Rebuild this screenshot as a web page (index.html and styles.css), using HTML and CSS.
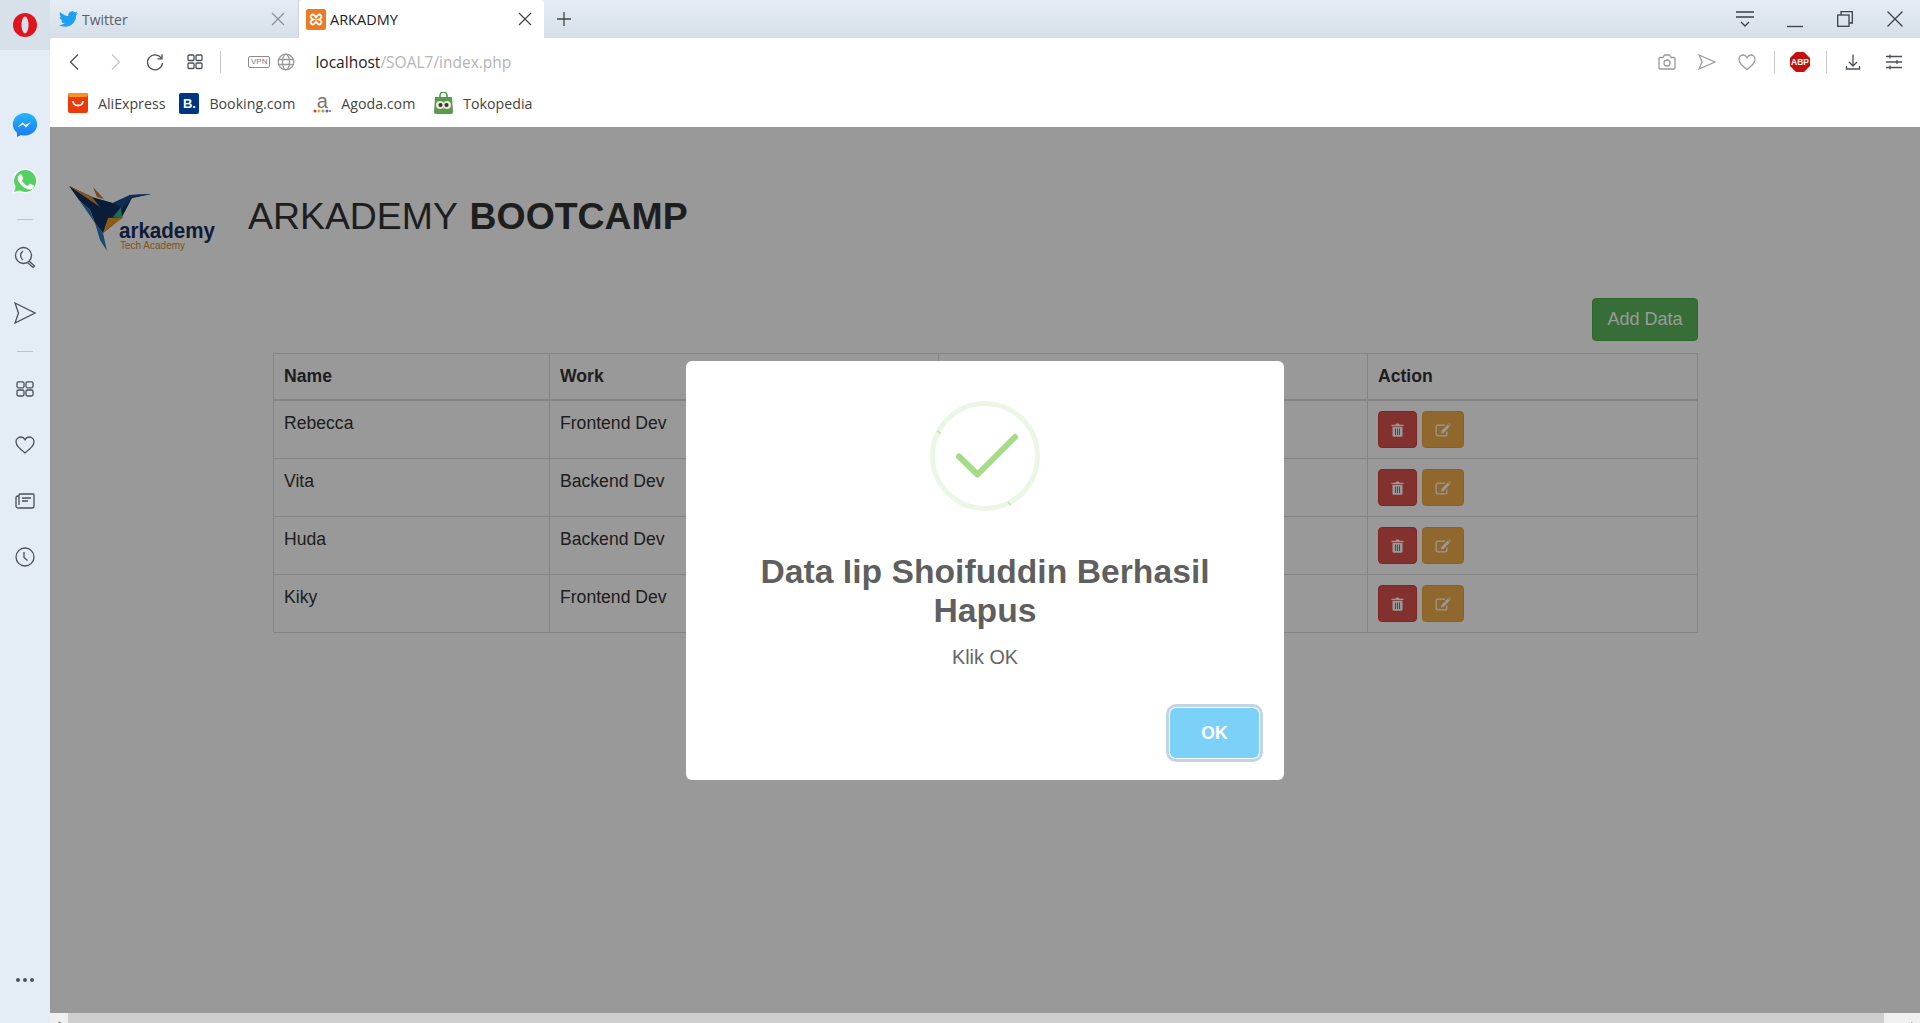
FILE: index.html
```html
<!DOCTYPE html>
<html lang="id">
<head>
    <meta charset="UTF-8">
    <title>ARKADMY</title>
    <link rel="stylesheet" href="styles.css">
</head>
<body>
<div class="browser">
    <aside class="sidebar">
        <div class="opera-btn">
            <svg width="24" height="24" viewBox="0 0 24 24"><path d="M12 0a12 12 0 1 0 0 24 12 12 0 1 0 0-24zM12 3.500a3.500 8.500 0 1 1 0 17 3.500 8.500 0 1 1 0-17z" fill="#e0141e" fill-rule="evenodd"/></svg>
        </div>
        <div class="side-list">
            <div class="side-item">
                <svg width="26" height="26" viewBox="0 0 26 26"><defs><linearGradient id="msg" x1="0" y1="0" x2="0" y2="1"><stop offset="0" stop-color="#22b8fb"/><stop offset="1" stop-color="#1a78f6"/></linearGradient></defs><path d="M13 1C6.200 1 .8 6 .8 12.300c0 3.500 1.600 6.500 4.200 8.600V25l3.900-2.100c1.300.4 2.700.6 4.100.6 6.800 0 12.200-5 12.200-11.200S19.800 1 13 1z" fill="url(#msg)"/><path d="M5.500 15.500l5-5.300 3 2.800 5.500-3-5 5.400-3-2.900z" fill="#fff"/></svg>
            </div>
            <div class="side-item">
                <svg width="26" height="26" viewBox="0 0 24 24"><path d="M1 23l1.600-5.700A10.900 10.900 0 1 1 6.800 21.500z" fill="#55d063" stroke="#f4f8f4" stroke-width="1.500"/><path d="M9 6.700c-.3-.6-.5-.6-.8-.6h-.7c-.2 0-.6.1-1 .5-.3.400-1.300 1.200-1.300 3s1.300 3.500 1.500 3.800c.2.200 2.600 4 6.300 5.500 3.100 1.200 3.700 1 4.400.9.700-.1 2.200-.9 2.500-1.800.3-.9.300-1.600.2-1.800-.1-.1-.3-.2-.7-.4l-2.500-1.200c-.3-.1-.6-.2-.8.2l-1.100 1.400c-.2.200-.4.300-.8.100-.4-.2-1.500-.6-2.900-1.800-1.100-1-1.800-2.200-2-2.500-.2-.4 0-.6.200-.8l.9-1.300c.1-.2.100-.4 0-.6z" fill="#fff"/></svg>
            </div>
            <div class="side-sep"></div>
            <div class="side-item">
                <svg class="line-icon" width="22" height="22" viewBox="0 0 22 22"><circle cx="9.500" cy="9.500" r="8"/><path d="M9 5a5.500 5.500 0 0 0 0 9"/><path d="M15 15l5.500 5 -1.500 1.500 -5.500-5"/></svg>
            </div>
            <div class="side-item">
                <svg class="line-icon" width="22" height="22" viewBox="0 0 22 22"><path d="M1 1l20 10L1 21l3.500-10z"/></svg>
            </div>
            <div class="side-sep"></div>
            <div class="side-item">
                <svg class="line-icon" width="18" height="16" viewBox="0 0 18 16"><rect x="1" y=".8" width="7" height="6" rx="1.500"/><rect x="10" y=".8" width="7" height="6" rx="1.500"/><rect x="1" y="9" width="7" height="6" rx="1.500"/><rect x="10" y="9" width="7" height="6" rx="1.500"/></svg>
            </div>
            <div class="side-item">
                <svg class="line-icon" width="20" height="18" viewBox="0 0 20 18"><path d="M10 17C4 12 1 9.500 1 5.800 1 3 3.200 1 5.600 1 7.500 1 9 2 10 3.800 11 2 12.500 1 14.400 1 16.800 1 19 3 19 5.800c0 3.700-3 6.200-9 11.200z"/></svg>
            </div>
            <div class="side-item">
                <svg class="line-icon" width="20" height="16" viewBox="0 0 20 16"><path d="M4 3V2a1 1 0 0 1 1-1h13a1 1 0 0 1 1 1v11a2 2 0 0 1-2 2H3a2 2 0 0 1-2-2V5a2 2 0 0 1 2-2h1v9"/><path d="M7 5h9M7 8h6"/></svg>
            </div>
            <div class="side-item">
                <svg class="line-icon" width="20" height="20" viewBox="0 0 20 20"><circle cx="10" cy="10" r="9"/><path d="M9 5v5.500l3.500 3"/></svg>
            </div>
        </div>
        <div class="side-dots"><i></i><i></i><i></i></div>
    </aside>

    <div class="window">
        <header class="tabbar">
            <div class="tab">
                <svg width="19" height="16" viewBox="0 0 24 20"><path d="M23.950 2.570a10 10 0 0 1-2.820.78 4.960 4.960 0 0 0 2.160-2.730c-.95.560-2 .960-3.130 1.190a4.920 4.920 0 0 0-8.380 4.480C7.690 6.100 4.070 4.130 1.640 1.160a4.820 4.820 0 0 0-.67 2.480c0 1.710.87 3.210 2.190 4.100a4.900 4.900 0 0 1-2.230-.62v.06a4.920 4.920 0 0 0 3.950 4.830 5 5 0 0 1-2.210.08 4.940 4.940 0 0 0 4.600 3.420 9.870 9.870 0 0 1-6.100 2.100c-.39 0-.78-.02-1.170-.06a14 14 0 0 0 7.560 2.210c9.050 0 14-7.500 14-13.990 0-.21 0-.42-.02-.63A9.940 9.940 0 0 0 24 2.590z" fill="#1da1f2"/></svg>
                <span class="tab-title">Twitter</span>
                <svg class="tab-close dim" width="14" height="14" viewBox="0 0 14 14"><path d="M1 1l12 12M13 1L1 13"/></svg>
            </div>
            <div class="tab tab-active">
                <svg width="20" height="21" viewBox="0 0 20 21"><rect width="20" height="21" rx="2" fill="#ee7a24"/><path d="M5 6.500c2-2.500 4 .5 5 2 1-1.500 3-4.500 5-2 1.500 2-1 3.500-2.500 4 1.500.5 4 2 2.500 4-2 2.500-4-.5-5-2-1 1.500-3 4.500-5 2-1.500-2 1-3.500 2.500-4-1.500-.5-4-2-2.500-4z" fill="none" stroke="#fff" stroke-width="1.800"/></svg>
                <span class="tab-title">ARKADMY</span>
                <svg class="tab-close" width="14" height="14" viewBox="0 0 14 14"><path d="M1 1l12 12M13 1L1 13"/></svg>
            </div>
            <svg class="new-tab" width="16" height="16" viewBox="0 0 16 16"><path d="M8 1v14M1 8h14"/></svg>
            <div class="win-controls">
                <svg class="win-menu" width="18" height="18" viewBox="0 0 18 18"><path d="M0 1h18M0 6h18M5 11l4 4 4-4"/></svg>
                <svg width="16" height="16" viewBox="0 0 16 16"><path d="M0 15.500h16"/></svg>
                <svg width="16" height="16" viewBox="0 0 16 16"><path d="M4 4V.7h11.300V12H12"/><rect x=".7" y="4" width="11.300" height="11.300"/></svg>
                <svg width="16" height="16" viewBox="0 0 16 16"><path d="M.5.500l15 15M15.500.500l-15 15"/></svg>
            </div>
        </header>

        <div class="chrome">
            <nav class="navbar">
                <div class="nav-icons">
                    <svg class="line-icon" width="20" height="20" viewBox="0 0 20 20"><path d="M13 2.500L5.500 10l7.500 7.500"/></svg>
                    <svg class="line-icon faint" width="20" height="20" viewBox="0 0 20 20"><path d="M7 2.500l7.500 7.500L7 17.500"/></svg>
                    <svg class="line-icon" width="20" height="20" viewBox="0 0 20 20"><path d="M16.500 6.500A7.500 7.500 0 1 0 17.500 11"/><path d="M12.500 6.800h4.500V2.300" /></svg>
                    <svg class="line-icon" width="20" height="20" viewBox="0 0 20 20"><rect x="3" y="3" width="6" height="5.500" rx="1"/><rect x="11" y="3" width="6" height="5.500" rx="1"/><rect x="3" y="11" width="6" height="5.500" rx="1"/><rect x="11" y="11" width="6" height="5.500" rx="1"/></svg>
                </div>
                <span class="nav-sep"></span>
                <span class="vpn">VPN</span>
                <svg class="line-icon gray globe" width="18" height="18" viewBox="0 0 18 18"><circle cx="9" cy="9" r="7.800"/><ellipse cx="9" cy="9" rx="3.500" ry="7.800"/><path d="M1.500 6.500h15M1.500 11.500h15"/></svg>
                <div class="url"><span class="url-host">localhost</span>/SOAL7/index.php</div>
                <div class="nav-right">
                    <svg class="line-icon gray" width="18" height="16" viewBox="0 0 18 16"><path d="M1 4.500a1 1 0 0 1 1-1h3l1.500-2.500h5L13 3.500h3a1 1 0 0 1 1 1V14a1 1 0 0 1-1 1H2a1 1 0 0 1-1-1z"/><circle cx="9" cy="9" r="3"/></svg>
                    <svg class="line-icon gray" width="18" height="16" viewBox="0 0 18 16"><path d="M1 1l16 7-16 7 3-7z"/></svg>
                    <svg class="line-icon gray" width="18" height="16" viewBox="0 0 18 16"><path d="M9 15.500C3.500 11 1 8.800 1 5.300 1 2.800 3 1 5 1c1.700 0 3 .9 4 2.600C10 1.900 11.300 1 13 1c2 0 4 1.800 4 4.300 0 3.500-2.500 5.700-8 10.200z"/></svg>
                    <span class="nav-sep sep-abp"></span>
                    <div class="abp">ABP</div>
                    <span class="nav-sep sep-dl"></span>
                    <svg class="line-icon download" width="18" height="18" viewBox="0 0 18 18"><path d="M9 1.500v11M5 9l4 4 4-4M2.500 13v3h13v-3"/></svg>
                    <svg class="line-icon sliders" width="18" height="16" viewBox="0 0 18 16"><path d="M1 2.500h16M1 8h16M1 13.500h16M5 .500v4M12 6v4M5 11.500v4"/></svg>
                </div>
            </nav>
            <div class="bookmarks">
                <a class="bookmark bm-ali">
                    <svg width="20" height="20" viewBox="0 0 20 20"><rect width="20" height="20" rx="2" fill="#ee3a0b"/><rect width="20" height="4" rx="2" fill="#f7931e"/><path d="M5 8c.5 6 9.500 6 10 0" fill="none" stroke="#fff" stroke-width="1.800"/></svg>
                    AliExpress
                </a>
                <a class="bookmark bm-booking">
                    <span class="booking-icon">B.</span>
                    Booking.com
                </a>
                <a class="bookmark bm-agoda">
                    <span class="agoda-icon">a<svg width="18" height="4" viewBox="0 0 18 4"><circle cx="2" cy="2" r="1.500" fill="#e0312b"/><circle cx="6" cy="2" r="1.500" fill="#f5a623"/><circle cx="10" cy="2" r="1.500" fill="#7cb342"/><circle cx="14" cy="2" r="1.500" fill="#8e44ad"/><circle cx="17" cy="2" r="1" fill="#2a7de1"/></svg></span>
                    Agoda.com
                </a>
                <a class="bookmark">
                    <svg width="19" height="22" viewBox="0 0 19 22"><path d="M6 5V3.500a3.500 3.500 0 0 1 7 0V5" fill="none" stroke="#3e9a3a" stroke-width="1.500"/><path d="M1 5h17l1 15a2 2 0 0 1-2 2H2a2 2 0 0 1-2-2z" fill="#5a9a4e"/><circle cx="6" cy="13" r="4" fill="#e8e8d8"/><circle cx="13" cy="13" r="4" fill="#e8e8d8"/><circle cx="6.500" cy="13" r="2" fill="#333"/><circle cx="12.500" cy="13" r="2" fill="#333"/><path d="M8.500 16l1 1.500 1-1.500z" fill="#f5a623"/></svg>
                    Tokopedia
                </a>
            </div>
        </div>

        <main class="viewport">
            <div class="page">
                <div class="page-head">
                    <svg class="logo" width="160" height="76" viewBox="65 180 160 76">
                        <polygon points="93,187 104,199 97,197" fill="#d07a1e"/>
                        <polygon points="69,186 92,197 113,203 130,195 151,194 132,198 122,217 113,225 103,233 95,223 90,210 79,200" fill="#10305e"/>
                        <polygon points="69,186 92,197 100,207" fill="#d9902a"/>
                        <polygon points="113,203 130,195 151,194 132,198 122,208" fill="#1b4d8a"/>
                        <polygon points="113,217 121,207 122,217" fill="#38b08e"/>
                        <polygon points="103,233 108,218 124,217 113,225" fill="#e99a23"/>
                        <polygon points="79,200 90,210 95,223" fill="#2e79b8"/>
                        <polygon points="95,223 103,233 107,251 100,240" fill="#2e79b8"/>
                        <text class="logo-name" x="119" y="238" textLength="96" lengthAdjust="spacingAndGlyphs">arkademy</text>
                        <text class="logo-sub" x="120" y="249">Tech Academy</text>
                    </svg>
                    <h1 class="page-title">ARKADEMY <b>BOOTCAMP</b></h1>
                </div>
                <div class="page-actions">
                    <button class="btn btn-add">Add Data</button>
                </div>
                <table class="data-table">
                    <thead>
                        <tr><th class="col-name">Name</th><th class="col-work">Work</th><th class="col-other"></th><th>Action</th></tr>
                    </thead>
                    <tbody>
                        <tr>
                            <td>Rebecca</td><td>Frontend Dev</td><td></td>
                            <td><div class="row-actions">
                                <button class="btn btn-del"><svg class="ico" width="13" height="14" viewBox="0 0 13 14"><path d="M4.500 1.800L5.300.4h2.400l.8 1.400H12.500v1.200H.5V1.800zM1.500 3.800h10v9a1 1 0 0 1-1 1h-8a1 1 0 0 1-1-1zM4 5.500v6.500h1V5.500zm2 0v6.500h1V5.500zm2 0v6.500h1V5.500z" fill-rule="evenodd"/></svg></button>
                                <button class="btn btn-edit"><svg class="ico" width="16" height="14" viewBox="0 0 16 14"><path d="M3 1.500h7v1.200H3a1.300 1.300 0 0 0-1.300 1.300v7A1.300 1.300 0 0 0 3 12.300h7a1.300 1.300 0 0 0 1.300-1.300V8.500h1.200V11a2.500 2.500 0 0 1-2.500 2.500H3A2.500 2.500 0 0 1 .5 11V4A2.500 2.500 0 0 1 3 1.500zM12.800 1.500l2 2-6.300 6.500-2.500.5.500-2.500zM13.500.8l.6-.6 1.800 1.800-.6.700z"/></svg></button>
                            </div></td>
                        </tr>
                        <tr>
                            <td>Vita</td><td>Backend Dev</td><td></td>
                            <td><div class="row-actions">
                                <button class="btn btn-del"><svg class="ico" width="13" height="14" viewBox="0 0 13 14"><path d="M4.500 1.800L5.300.4h2.400l.8 1.400H12.500v1.200H.5V1.800zM1.500 3.800h10v9a1 1 0 0 1-1 1h-8a1 1 0 0 1-1-1zM4 5.500v6.500h1V5.500zm2 0v6.500h1V5.500zm2 0v6.500h1V5.500z" fill-rule="evenodd"/></svg></button>
                                <button class="btn btn-edit"><svg class="ico" width="16" height="14" viewBox="0 0 16 14"><path d="M3 1.500h7v1.200H3a1.300 1.300 0 0 0-1.300 1.300v7A1.300 1.300 0 0 0 3 12.300h7a1.300 1.300 0 0 0 1.300-1.300V8.500h1.200V11a2.500 2.500 0 0 1-2.500 2.500H3A2.500 2.500 0 0 1 .5 11V4A2.500 2.500 0 0 1 3 1.500zM12.800 1.500l2 2-6.300 6.500-2.500.5.500-2.500zM13.500.8l.6-.6 1.800 1.800-.6.700z"/></svg></button>
                            </div></td>
                        </tr>
                        <tr>
                            <td>Huda</td><td>Backend Dev</td><td></td>
                            <td><div class="row-actions">
                                <button class="btn btn-del"><svg class="ico" width="13" height="14" viewBox="0 0 13 14"><path d="M4.500 1.800L5.300.4h2.400l.8 1.400H12.500v1.200H.5V1.800zM1.500 3.800h10v9a1 1 0 0 1-1 1h-8a1 1 0 0 1-1-1zM4 5.500v6.500h1V5.500zm2 0v6.500h1V5.500zm2 0v6.500h1V5.500z" fill-rule="evenodd"/></svg></button>
                                <button class="btn btn-edit"><svg class="ico" width="16" height="14" viewBox="0 0 16 14"><path d="M3 1.500h7v1.200H3a1.300 1.300 0 0 0-1.300 1.300v7A1.300 1.300 0 0 0 3 12.300h7a1.300 1.300 0 0 0 1.300-1.300V8.500h1.200V11a2.500 2.500 0 0 1-2.500 2.500H3A2.500 2.500 0 0 1 .5 11V4A2.500 2.500 0 0 1 3 1.500zM12.800 1.500l2 2-6.300 6.500-2.500.5.500-2.500zM13.500.8l.6-.6 1.800 1.800-.6.700z"/></svg></button>
                            </div></td>
                        </tr>
                        <tr>
                            <td>Kiky</td><td>Frontend Dev</td><td></td>
                            <td><div class="row-actions">
                                <button class="btn btn-del"><svg class="ico" width="13" height="14" viewBox="0 0 13 14"><path d="M4.500 1.800L5.300.4h2.400l.8 1.400H12.500v1.200H.5V1.800zM1.500 3.800h10v9a1 1 0 0 1-1 1h-8a1 1 0 0 1-1-1zM4 5.500v6.500h1V5.500zm2 0v6.500h1V5.500zm2 0v6.500h1V5.500z" fill-rule="evenodd"/></svg></button>
                                <button class="btn btn-edit"><svg class="ico" width="16" height="14" viewBox="0 0 16 14"><path d="M3 1.500h7v1.200H3a1.300 1.300 0 0 0-1.300 1.300v7A1.300 1.300 0 0 0 3 12.300h7a1.300 1.300 0 0 0 1.300-1.300V8.500h1.200V11a2.500 2.500 0 0 1-2.500 2.500H3A2.500 2.500 0 0 1 .5 11V4A2.500 2.500 0 0 1 3 1.500zM12.800 1.500l2 2-6.300 6.500-2.500.5.500-2.500zM13.500.8l.6-.6 1.800 1.800-.6.700z"/></svg></button>
                            </div></td>
                        </tr>
                    </tbody>
                </table>
            </div>

            <!-- alert over the page -->
            <div class="overlay">
                <div class="modal">
                    <svg class="modal-icon" width="110" height="110" viewBox="0 0 110 110">
                        <circle cx="55" cy="55" r="52.500" fill="none" stroke="#ebf7e5" stroke-width="5"/>
                        <path d="M7 30l4 2.500M78 101l3 3.500" stroke="#c3e8ae" stroke-width="1.500"/>
                        <path d="M29 55.500l18.500 18L85 36" fill="none" stroke="#a5dc86" stroke-width="6" stroke-linecap="round" stroke-linejoin="round"/>
                    </svg>
                    <h2 class="modal-title">Data Iip Shoifuddin Berhasil Hapus</h2>
                    <p class="modal-text">Klik OK</p>
                    <div class="modal-footer">
                        <button class="modal-ok">OK</button>
                    </div>
                </div>
            </div>
        </main>

        <div class="hscroll">
            <div class="hscroll-cap cap-left"><svg width="10" height="10" viewBox="0 0 10 10"><path d="M6 1L1 8"/></svg></div>
            <div class="hscroll-track"></div>
            <div class="hscroll-cap cap-right"><svg width="10" height="10" viewBox="0 0 10 10"><path d="M1 1l6 6"/></svg></div>
        </div>
    </div>
</div>
</body>
</html>
```

FILE: styles.css
```css
* {
    box-sizing: border-box;
}
html, body {
    margin: 0;
    height: 100%;
    overflow: hidden;
}
body {
    font-family: "Liberation Sans", Arial, sans-serif;
    color: #333;
    background: #e3ebf4;
}
.browser {
    display: flex;
    height: 1023px;
}

/* left opera strip */
.sidebar {
    width: 50px;
    flex-shrink: 0;
    display: flex;
    flex-direction: column;
    background: #e4ecf5;
}
.opera-btn {
    height: 50px;
    display: flex;
    align-items: center;
    justify-content: center;
    background: #d6e1ea;
}
.side-list {
    padding-top: 47px;
}
.side-item {
    height: 56px;
    display: flex;
    align-items: center;
    justify-content: center;
}
.side-sep {
    height: 1px;
    margin: 10px 17px 9px;
    background: #b9c4cf;
}
.side-dots {
    margin-top: auto;
    padding-bottom: 41px;
    display: flex;
    justify-content: center;
    gap: 3px;
}
.side-dots i {
    width: 4px;
    height: 4px;
    border-radius: 50%;
    background: #4a5360;
}
.line-icon {
    fill: none;
    stroke: #4a5058;
    stroke-width: 1.3;
}
.line-icon.gray {
    stroke: #9b9b9b;
}
.line-icon.faint {
    stroke: #c8c8c8;
}

/* tabs */
.window {
    flex: 1;
    min-width: 0;
    display: flex;
    flex-direction: column;
}
.tabbar {
    height: 38px;
    display: flex;
    align-items: stretch;
    background: linear-gradient(#e5ecf4, #d6dfe9);
}
.tab {
    width: 249px;
    padding: 0 13px 0 9px;
    display: flex;
    align-items: center;
    gap: 4px;
    font-family: "Open Sans", sans-serif;
    font-size: 14px;
    color: #5b6066;
    border-right: 1px solid #ccd5df;
}
.tab-active {
    width: 245px;
    padding-left: 7px;
    padding-right: 12px;
    border: 0;
    border-radius: 4px 4px 0 0;
    background: #fff;
    color: #222;
    font-size: 14.5px;
}
.tab-title {
    flex: 1;
}
.tab-close {
    fill: none;
    stroke: #444;
    stroke-width: 1.2;
}
.tab-close.dim {
    stroke: #8b9098;
}
.new-tab {
    align-self: center;
    margin-left: 12px;
    fill: none;
    stroke: #444;
    stroke-width: 1.3;
}
.win-controls {
    margin-left: auto;
    padding: 11px 17px 0 0;
    display: flex;
    gap: 34px;
    height: 38px;
}
.win-controls svg {
    fill: none;
    stroke: #3c4046;
    stroke-width: 1.3;
    overflow: visible;
}
.win-menu {
    margin-right: -1px;
}

/* toolbar */
.chrome {
    background: #fff;
    border-radius: 4px 0 0 0;
}
.navbar {
    height: 48px;
    padding: 0 17px 0 15px;
    display: flex;
    align-items: center;
}
.nav-icons {
    display: flex;
    gap: 20px;
}
.nav-sep {
    width: 1px;
    height: 22px;
    margin-left: 15px;
    background: #c9c9c9;
}
.vpn {
    margin-left: 27px;
    padding: 0 2px;
    border: 1px solid #8c8c8c;
    border-radius: 2px;
    font-size: 8px;
    line-height: 10px;
    color: #7d7d7d;
}
.globe {
    margin-left: 7px;
}
.url {
    margin-left: 20px;
    font-family: "Open Sans", sans-serif;
    font-size: 15.5px;
    color: #b4b4b4;
}
.url-host {
    color: #222;
}
.nav-right {
    margin-left: auto;
    display: flex;
    align-items: center;
    gap: 22px;
}
.sep-abp {
    margin-left: -4px;
}
.abp {
    width: 20px;
    height: 20px;
    margin-left: -7px;
    display: flex;
    align-items: center;
    justify-content: center;
    background: #c50f0f;
    clip-path: polygon(30% 0, 70% 0, 100% 30%, 100% 70%, 70% 100%, 30% 100%, 0 70%, 0 30%);
    font-size: 8.5px;
    font-weight: bold;
    color: #fff;
}
.sep-dl {
    margin-left: -6px;
}
.download {
    margin-left: -5px;
}
.sliders {
    margin-left: 1px;
}

/* bookmarks */
.bookmarks {
    height: 41px;
    padding: 0 0 7px 18px;
    display: flex;
    align-items: center;
    font-family: "Open Sans", sans-serif;
    font-size: 14.2px;
    color: #444;
}
.bookmark {
    display: flex;
    align-items: center;
    gap: 10px;
}
.bm-ali { margin-right: 14px; }
.bm-booking { margin-right: 18px; }
.bm-agoda { margin-right: 19px; }
.booking-icon {
    width: 20px;
    height: 21px;
    border-radius: 2px;
    background: #003580;
    color: #fff;
    font-family: "Liberation Sans", sans-serif;
    font-size: 13px;
    font-weight: bold;
    line-height: 21px;
    text-align: center;
}
.agoda-icon {
    width: 18px;
    display: flex;
    flex-direction: column;
    align-items: center;
    font-family: "Liberation Sans", sans-serif;
    font-size: 20px;
    line-height: 15px;
    color: #777;
}

/* the page, behind the alert */
.viewport {
    position: relative;
    flex: 1;
    min-height: 0;
    background: #fff;
    overflow: hidden;
}
.page-head {
    height: 129px;
    padding: 53px 0 0 15px;
    display: flex;
    align-items: flex-start;
    gap: 23px;
}
.logo-name {
    font-size: 22px;
    font-weight: bold;
    fill: #16305c;
}
.logo-sub {
    font-size: 10px;
    fill: #d58a2c;
}
.page-title {
    margin: 0;
    padding-top: 14px;
    font-size: 37.4px;
    font-weight: normal;
    line-height: 44px;
}
.page-title b {
    margin-left: 2px;
}
.page-actions {
    margin: 42px 222px 12px 0;
    display: flex;
    justify-content: flex-end;
}
.btn {
    border: 1px solid transparent;
    border-radius: 4px;
    color: #fff;
    font-family: inherit;
}
.btn-add {
    width: 106px;
    height: 43px;
    padding: 0;
    background: #5cb85c;
    border-color: #4cae4c;
    font-size: 18px;
}
.data-table {
    width: 1425px;
    margin-left: 223px;
    border-collapse: separate;
    border-spacing: 0;
    table-layout: fixed;
    font-size: 17.6px;
}
.data-table th, .data-table td {
    padding: 10px;
    border-right: 1px solid #ddd;
    border-bottom: 1px solid #ddd;
    text-align: left;
    vertical-align: top;
    line-height: 25px;
}
.data-table th:first-child, .data-table td:first-child {
    border-left: 1px solid #ddd;
}
.data-table th {
    height: 48px;
    border-top: 1px solid #ddd;
    border-bottom-width: 2px;
}
.data-table td {
    height: 58px;
}
.col-name { width: 277px; }
.col-work { width: 389px; }
.col-other { width: 429px; }
.row-actions {
    display: flex;
    gap: 5px;
}
.btn-del, .btn-edit {
    height: 37px;
    padding: 0;
    display: flex;
    align-items: center;
    justify-content: center;
}
.btn-del {
    width: 39px;
    background: #d9534f;
    border-color: #d43f3a;
}
.btn-edit {
    width: 42px;
    background: #f0ad4e;
    border-color: #eea236;
}
.ico {
    fill: #fff;
}

/* alert */
.overlay {
    position: absolute;
    inset: 0;
    padding-top: 1px;
    display: flex;
    align-items: center;
    justify-content: center;
    background: rgba(0, 0, 0, 0.4);
}
.modal {
    width: 598px;
    height: 419px;
    padding-top: 40px;
    display: flex;
    flex-direction: column;
    align-items: center;
    border-radius: 6px;
    background: #fff;
}
.modal-icon {
    flex-shrink: 0;
}
.modal-title {
    margin: 41px 0 0;
    width: 480px;
    font-size: 33.7px;
    line-height: 39px;
    font-weight: bold;
    text-align: center;
    color: rgba(0, 0, 0, 0.65);
}
.modal-text {
    margin: 13px 0 0;
    font-size: 19.8px;
    line-height: 28px;
    color: #666;
}
.modal-footer {
    width: 100%;
    margin-top: auto;
    padding: 0 25px 22px 0;
    display: flex;
    justify-content: flex-end;
}
.modal-ok {
    width: 89px;
    height: 50px;
    border: 0;
    border-radius: 6px;
    background: #7cd1f9;
    box-shadow: 0 0 0 1px #fff, 0 0 0 4px rgba(43, 114, 165, 0.29);
    color: #fff;
    font-family: inherit;
    font-size: 17.6px;
    font-weight: bold;
}

/* horizontal scrollbar, cut by the window edge */
.hscroll {
    height: 10px;
    flex-shrink: 0;
    display: flex;
    background: #cfcfcf;
}
.hscroll-cap {
    background: #f0f0f0;
    overflow: hidden;
}
.cap-left {
    width: 18px;
    padding: 4px 0 0 4px;
}
.cap-right {
    width: 36px;
    padding: 5px 0 0 26px;
}
.hscroll-cap svg {
    fill: none;
    stroke-width: 2;
    stroke: #777;
}
.cap-right svg {
    stroke: #444;
}
.hscroll-track {
    flex: 1;
}
```
